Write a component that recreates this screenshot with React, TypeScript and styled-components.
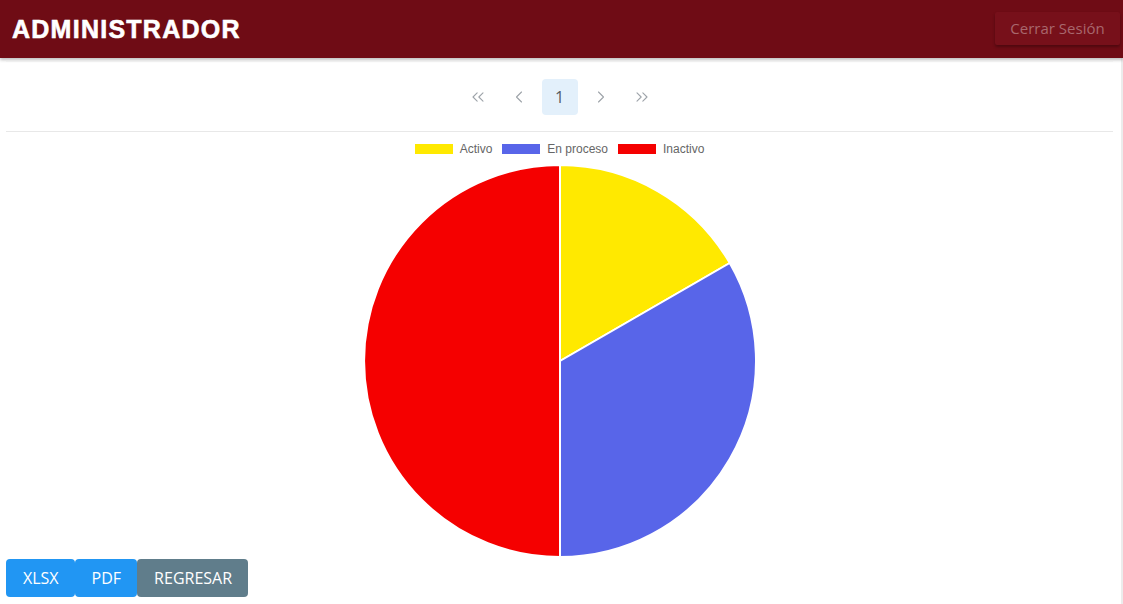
import styled, { createGlobalStyle } from "styled-components";
import { ChevronLeft, ChevronRight, ChevronsLeft, ChevronsRight } from "lucide-react";

const GlobalStyle = createGlobalStyle`
  body {
    margin: 0;
    background: #ffffff;
    font-family: "Open Sans", "Liberation Sans", sans-serif;
  }
`;

const Page = styled.div`
  min-height: 604px;
  border-right: 2px solid #ececec;
  box-sizing: border-box;
`;

const TopBar = styled.header`
  height: 58px;
  background: #6f0c15;
  display: flex;
  align-items: center;
  justify-content: space-between;
  padding: 0 3px 0 12px;
  box-shadow: 0 2px 3px rgba(0, 0, 0, 0.25);
  margin-right: -2px;
`;

const Title = styled.h1`
  margin: 0;
  color: #ffffff;
  font-family: "Liberation Sans", Arial, sans-serif;
  font-weight: 900;
  font-size: 25px;
  letter-spacing: 1.25px;
  -webkit-text-stroke: 0.6px #ffffff;
  padding-top: 1px;
`;

const LogoutButton = styled.button`
  width: 125px;
  height: 33px;
  margin-top: -2px;
  border: none;
  border-radius: 2px;
  background: #77101a;
  color: #a8676d;
  font-family: "Open Sans", sans-serif;
  font-size: 15px;
  box-shadow: 0 2px 3px rgba(0, 0, 0, 0.3);
`;

const Panel = styled.main`
  margin: 3px 8px 0 6px;
  border-top: 1px solid #efefef;
`;

const Pager = styled.nav`
  display: flex;
  justify-content: center;
  align-items: center;
  gap: 5px;
  padding: 17px 0 16px;
  border-bottom: 1px solid #e8e8e8;
`;

const PageItem = styled.span<{ $active?: boolean }>`
  width: 36px;
  height: 36px;
  display: flex;
  align-items: center;
  justify-content: center;
  border-radius: 4px;
  color: ${(p) => (p.$active ? "#555b62" : "#9da3a9")};
  background: ${(p) => (p.$active ? "#e3f0fb" : "transparent")};
  font-size: 16px;
`;

const Legend = styled.ul`
  list-style: none;
  margin: 10px 0 0;
  padding: 0;
  display: flex;
  justify-content: center;
  gap: 10px;
  font-family: "Liberation Sans", Arial, sans-serif;
  font-size: 12px;
  color: #666666;
  height: 13px;
  align-items: center;
`;

const LegendItem = styled.li`
  display: flex;
  align-items: center;
  gap: 7px;
`;

const Swatch = styled.span<{ $color: string }>`
  width: 38px;
  height: 10px;
  background: ${(p) => p.$color};
`;

const ChartArea = styled.div`
  display: flex;
  justify-content: center;
  margin-top: 9px;
`;

const Actions = styled.div`
  display: flex;
  padding: 1px 0 0 6px;
`;

const ActionButton = styled.button<{ $tone: "blue" | "grey" }>`
  height: 38px;
  padding: 0 16px 0 17px;
  border: none;
  border-radius: 4px;
  background: ${(p) => (p.$tone === "blue" ? "#2196f3" : "#607d8b")};
  color: #ffffff;
  font-family: "Open Sans", sans-serif;
  font-size: 16px;
  text-transform: uppercase;
`;

const slices = [
  { label: "Activo", color: "#ffe900", d: "M197,197 L197,1 A196,196 0 0 1 366.74,99 Z" },
  { label: "En proceso", color: "#5865e9", d: "M197,197 L366.74,99 A196,196 0 0 1 197,393 Z" },
  { label: "Inactivo", color: "#f50000", d: "M197,197 L197,393 A196,196 0 0 1 197,1 Z" },
];

export default function App() {
  return (
    <Page>
      <GlobalStyle />
      <TopBar>
        <Title>ADMINISTRADOR</Title>
        <LogoutButton>Cerrar Sesión</LogoutButton>
      </TopBar>
      <Panel>
        <Pager>
          <PageItem><ChevronsLeft size={20} strokeWidth={1.3} /></PageItem>
          <PageItem><ChevronLeft size={20} strokeWidth={1.3} /></PageItem>
          <PageItem $active>1</PageItem>
          <PageItem><ChevronRight size={20} strokeWidth={1.3} /></PageItem>
          <PageItem><ChevronsRight size={20} strokeWidth={1.3} /></PageItem>
        </Pager>
        <Legend>
          {slices.map((s) => (
            <LegendItem key={s.label}>
              <Swatch $color={s.color} />
              {s.label}
            </LegendItem>
          ))}
        </Legend>
        <ChartArea>
          <svg width="394" height="394" viewBox="0 0 394 394">
            {slices.map((s) => (
              <path key={s.label} d={s.d} fill={s.color} stroke="#ffffff" strokeWidth="2" />
            ))}
          </svg>
        </ChartArea>
      </Panel>
      <Actions>
        <ActionButton $tone="blue">XLSX</ActionButton>
        <ActionButton $tone="blue">PDF</ActionButton>
        <ActionButton $tone="grey">Regresar</ActionButton>
      </Actions>
    </Page>
  );
}
